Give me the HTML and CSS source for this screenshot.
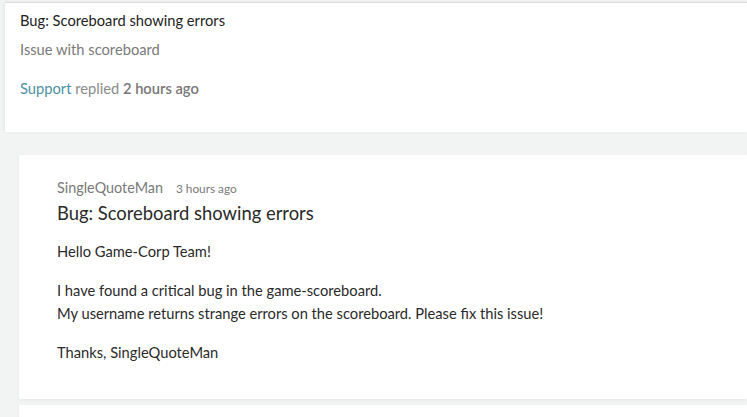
FILE: index.html
```html
<!DOCTYPE html>
<html>
<head>
<meta charset="utf-8">
<link rel="stylesheet" href="styles.css">
</head>
<body>
<div class="page">
  <div class="ticket">
    <div class="ticket-title">Bug: Scoreboard showing errors</div>
    <div class="ticket-sub">Issue with scoreboard</div>
    <div class="ticket-meta"><span class="who">Support</span> replied <span class="when">2 hours ago</span></div>
  </div>
  <div class="message">
    <div class="msg-head"><span class="author">SingleQuoteMan</span><span class="time">3 hours ago</span></div>
    <div class="msg-title">Bug: Scoreboard showing errors</div>
    <div class="msg-body">
      <p>Hello Game-Corp Team!</p>
      <p>I have found a critical bug in the game-scoreboard.<br>My username returns strange errors on the scoreboard. Please fix this issue!</p>
      <p>Thanks, SingleQuoteMan</p>
    </div>
  </div>
  <div class="message next"></div>
</div>
</body>
</html>
```
FILE: styles.css
```css
html, body { margin: 0; padding: 0; }
body {
  background: #f2f3f3;
  font-family: Lato, "Noto Sans", sans-serif;
  color: #333;
  overflow: hidden;
  height: 417px;
}
.page { padding-top: 2px; }
.ticket {
  margin-left: 5px;
  background: #fff;
  border-top: 1px solid #dcdcdc;
  box-shadow: -1px 0 3px rgba(0,0,0,0.06);
  padding: 8px 0 0 15px;
  height: 121px;
}
.ticket-title { font-size: 14.7px; line-height: 18px; color: #222; }
.ticket-sub { font-size: 14.7px; line-height: 18px; color: #7a7a7a; margin-top: 11px; }
.ticket-meta { font-size: 14.7px; line-height: 18px; color: #8a8a8a; margin-top: 21px; }
.ticket-meta .who { color: #4a8fa3; }
.ticket-meta .when { color: #777; font-weight: 600; }
.message {
  margin: 23px 0 0 19px;
  background: #fff;
  box-shadow: 0 1px 3px rgba(0,0,0,0.05);
  padding: 24px 0 0 38px;
  height: 220px;
}
.msg-head { line-height: 16px; }
.author { font-size: 14.4px; color: #7a7a7a; }
.time { font-size: 11.8px; color: #7a7a7a; margin-left: 13px; }
.msg-title { font-size: 18.4px; line-height: 22px; color: #2a2a2a; margin-top: 5px; }
.msg-body { font-size: 14.7px; line-height: 23px; color: #2a2a2a; margin-top: 16px; }
.msg-body p { margin: 0 0 16px; }
.message.next { margin-top: 6px; height: 12px; padding: 0; }
```
